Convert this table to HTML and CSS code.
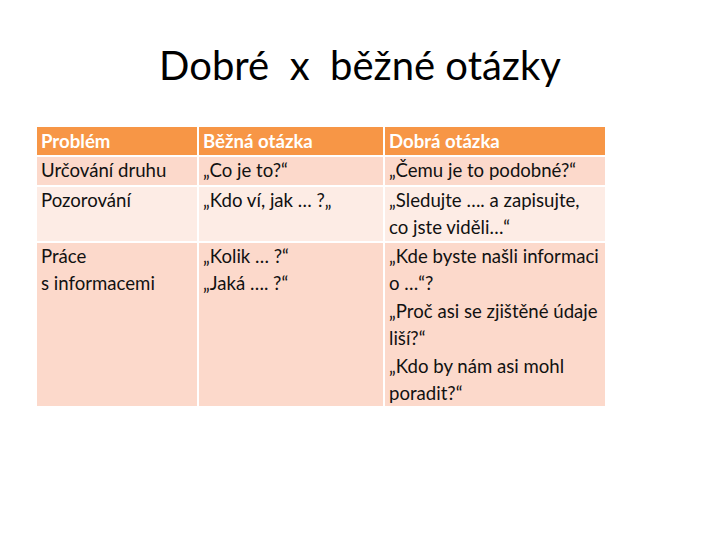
FILE: index.html
```html
<!DOCTYPE html>
<html lang="cs">
<head>
<meta charset="utf-8">
<title>Dobré x běžné otázky</title>
<link rel="stylesheet" href="styles.css">
</head>
<body>
<div class="slide">
  <h1 class="title">Dobré  x  běžné otázky</h1>
  <div class="table">
    <div class="cell head">Problém</div>
    <div class="cell head">Běžná otázka</div>
    <div class="cell head">Dobrá otázka</div>

    <div class="cell odd">Určování druhu</div>
    <div class="cell odd">„Co je to?“</div>
    <div class="cell odd">„Čemu je to podobné?“</div>

    <div class="cell even">Pozorování</div>
    <div class="cell even">„Kdo ví, jak … ?„</div>
    <div class="cell even">„Sledujte …. a zapisujte,<br>co jste viděli…“</div>

    <div class="cell odd">Práce<br>s informacemi</div>
    <div class="cell odd">„Kolik … ?“<br>„Jaká …. ?“</div>
    <div class="cell odd">„Kde byste našli informaci<br>o …“?<br>„Proč asi se zjištěné údaje<br>liší?“<br>„Kdo by nám asi mohl<br>poradit?“</div>
  </div>
</div>
</body>
</html>
```
FILE: styles.css
```css
html, body {
  margin: 0;
  padding: 0;
  background: #ffffff;
}
.slide {
  width: 720px;
  height: 540px;
  font-family: "Lato", "Open Sans", sans-serif;
  color: #000000;
}
.title {
  margin: 0;
  padding-top: 40px;
  height: 50px;
  line-height: 50px;
  text-align: center;
  font-weight: 400;
  font-size: 40px;
  white-space: pre;
}
.table {
  margin: 37px 0 0 37px;
  display: grid;
  grid-template-columns: 160px 184px 220px;
  grid-template-rows: 28px 28px 54px 163px;
  gap: 2px;
  width: 568px;
}
.cell {
  padding-left: 4px;
  font-size: 18.6px;
  line-height: 27.4px;
  white-space: nowrap;
  color: #111111;
}
.head {
  background: #f79646;
  color: #ffffff;
  font-weight: 700;
  font-size: 18.6px;
  line-height: 29px;
}
.odd {
  background: #fcd9cb;
}
.even {
  background: #fdece5;
}
```
